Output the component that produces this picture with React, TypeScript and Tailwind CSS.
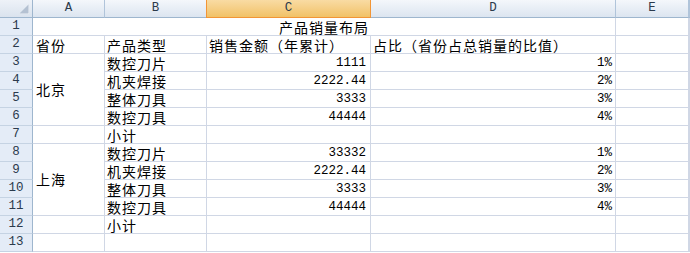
import React from "react";

const cjk = "font-['SimSun','Noto_Sans_CJK_SC',sans-serif] text-[14px] tracking-[1px] leading-[17px] text-black";
const num = "font-['Liberation_Mono',monospace] text-[12.5px] leading-[17px] text-black";
const cell = "h-[18px] border-r border-b border-[#d0d7e5] bg-white overflow-visible whitespace-nowrap";
const rowHead =
  "h-[18px] border-r border-b border-r-[#9eb6ce] border-b-[#c5d3e3] bg-[#e4ecf7] flex items-center justify-center font-['Liberation_Mono',monospace] text-[12.5px] text-[#2b3a4c]";
const colHead =
  "h-[18px] border-r border-b border-r-[#b0c4da] border-b-[#9eb6ce] bg-gradient-to-b from-[#f4f7fb] to-[#dce5f0] flex items-center justify-center font-['Liberation_Mono',monospace] text-[12.5px] text-[#2b3a4c]";
const colHeadActive =
  "h-[18px] border-r border-b border-[#f29536] bg-gradient-to-b from-[#f9dba3] to-[#f1c266] flex items-center justify-center font-['Liberation_Mono',monospace] text-[12.5px] text-[#2b3a4c]";

type Row = {
  n: number;
  b?: string;
  c?: string;
  d?: string;
};

const Blank = () => <div className={cell} />;

function ProvinceBlock({ name, rows }: { name: string; rows: Row[] }) {
  return (
    <>
      {rows.map((r, i) => (
        <React.Fragment key={r.n}>
          <div className={rowHead}>{r.n}</div>
          {i === 0 && (
            <div
              className={`row-span-4 h-auto border-r border-b border-[#d0d7e5] bg-white flex items-center pl-[3px] ${cjk}`}
            >
              {name}
            </div>
          )}
          <div className={`${cell} ${cjk} pl-[2px] pt-[1px]`}>{r.b}</div>
          <div className={`${cell} ${num} text-right pr-[4px] pt-[1px]`}>{r.c}</div>
          <div className={`${cell} ${num} text-right pr-[3px] pt-[1px]`}>{r.d}</div>
          <Blank />
          <Blank />
        </React.Fragment>
      ))}
    </>
  );
}

function SubtotalRow({ n }: { n: number }) {
  return (
    <>
      <div className={rowHead}>{n}</div>
      <Blank />
      <div className={`${cell} ${cjk} pl-[2px] pt-[1px]`}>小计</div>
      <Blank />
      <Blank />
      <Blank />
      <Blank />
    </>
  );
}

export default function App() {
  const beijing: Row[] = [
    { n: 3, b: "数控刀片", c: "1111", d: "1%" },
    { n: 4, b: "机夹焊接", c: "2222.44", d: "2%" },
    { n: 5, b: "整体刀具", c: "3333", d: "3%" },
    { n: 6, b: "数控刀具", c: "44444", d: "4%" },
  ];
  const shanghai: Row[] = [
    { n: 8, b: "数控刀片", c: "33332", d: "1%" },
    { n: 9, b: "机夹焊接", c: "2222.44", d: "2%" },
    { n: 10, b: "整体刀具", c: "3333", d: "3%" },
    { n: 11, b: "数控刀具", c: "44444", d: "4%" },
  ];

  return (
    <div className="w-[690px] h-[253px] overflow-hidden bg-white">
      <div className="grid grid-cols-[33px_72px_102px_164px_245px_73px_1fr] auto-rows-[18px]">
        {/* column headers */}
        <div className="h-[18px] border-r border-b border-r-[#9eb6ce] border-b-[#9eb6ce] bg-gradient-to-b from-[#eef2f8] to-[#dae3ee] flex items-end justify-end pr-[3px] pb-[3px]">
          <svg width="10" height="10" viewBox="0 0 10 10">
            <polygon points="10,0 10,10 0,10" fill="#b4c1d2" />
            <polyline points="0,10 10,10 10,0" fill="none" stroke="#ffffff" strokeWidth="0.8" />
          </svg>
        </div>
        <div className={colHead}>A</div>
        <div className={colHead}>B</div>
        <div className={`${colHeadActive} -ml-px border-l`}>C</div>
        <div className={colHead}>D</div>
        <div className={colHead}>E</div>
        <div className={colHead} />

        {/* row 1: merged title A1:D1 */}
        <div className={rowHead}>1</div>
        <div className={`col-span-4 ${cell} ${cjk} text-center pt-[1px]`}>产品销量布局</div>
        <Blank />
        <Blank />

        {/* row 2: column titles */}
        <div className={rowHead}>2</div>
        <div className={`${cell} ${cjk} pl-[3px] pt-[1px]`}>省份</div>
        <div className={`${cell} ${cjk} pl-[2px] pt-[1px]`}>产品类型</div>
        <div className={`${cell} ${cjk} pl-[2px] pt-[1px]`}>销售金额（年累计）</div>
        <div className={`${cell} ${cjk} pl-[2px] pt-[1px]`}>占比（省份占总销量的比值）</div>
        <Blank />
        <Blank />

        <ProvinceBlock name="北京" rows={beijing} />
        <SubtotalRow n={7} />
        <ProvinceBlock name="上海" rows={shanghai} />
        <SubtotalRow n={12} />

        {/* row 13: empty */}
        <div className={rowHead}>13</div>
        <Blank />
        <Blank />
        <Blank />
        <Blank />
        <Blank />
        <Blank />
      </div>
    </div>
  );
}
